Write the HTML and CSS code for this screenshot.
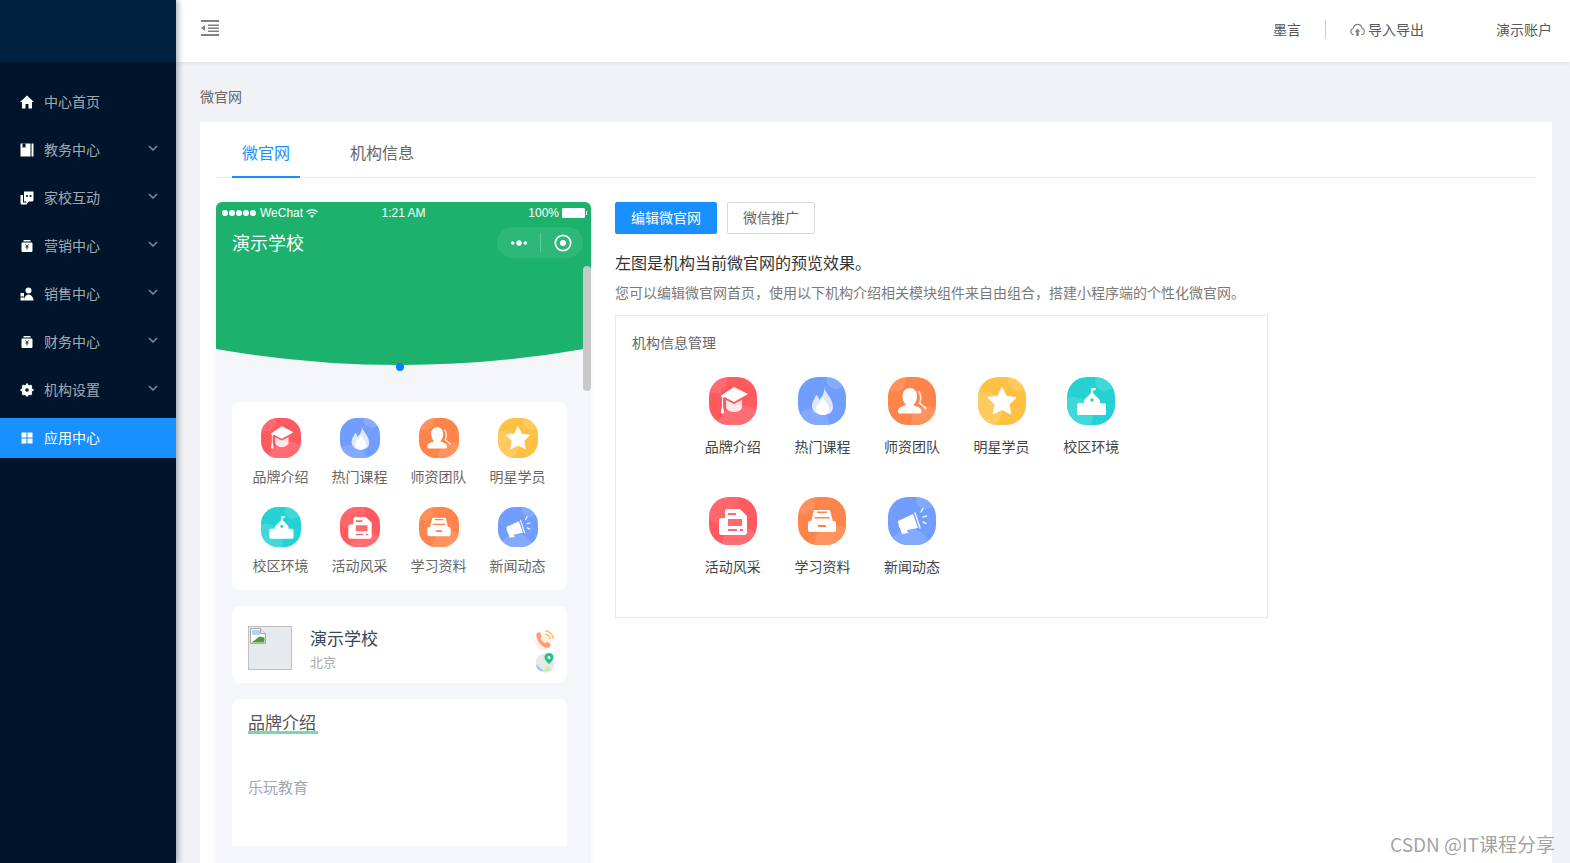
FILE: index.html
```html
<!DOCTYPE html>
<html lang="zh-CN">
<head>
<meta charset="utf-8">
<title>微官网</title>
<link rel="stylesheet" href="styles.css">
</head>
<body>
<svg class="defs" width="0" height="0" aria-hidden="true">
  <defs>
    <clipPath id="sq"><rect width="48" height="48" rx="20"/></clipPath>
    <symbol id="i-cap" viewBox="0 0 48 48">
      <g clip-path="url(#sq)"><rect width="48" height="48" fill="#ff5a5e"/><circle cx="32" cy="52" r="24" fill="#ff7479" opacity=".7"/><circle cx="6" cy="4" r="12" fill="#ff7479" opacity=".6"/></g>
      <path d="M17 23v8c2 3 5 4 8 4s6-1 8-4v-8l-8 4z" fill="#fff" opacity=".85"/>
      <path d="M25 10l14 7-14 8-9.500-5-1.500 1v8l1 6c0 2-3 2-3 0l1-6v-9l-1.500-1z" fill="#fff"/>
    </symbol>
    <symbol id="i-flame" viewBox="0 0 48 48">
      <g clip-path="url(#sq)"><rect width="48" height="48" fill="#719dff"/><circle cx="38" cy="2" r="10" fill="#8fb2ff" opacity=".7"/><circle cx="14" cy="50" r="18" fill="#8fb2ff" opacity=".6"/></g>
      <path d="M26 10c1 6 9 11 9 20 0 6-5 8-10 8s-11-3-11-9c0-5 3-7 4-11 2 1 3 3 3 5 3-3 6-7 5-13z" fill="#dfe8ff"/>
      <path d="M25 20c1 4 6 7 6 12 0 4-3 6-6 6s-7-2-7-6c0-5 6-7 7-12z" fill="#fff"/>
    </symbol>
    <symbol id="i-person" viewBox="0 0 48 48">
      <g clip-path="url(#sq)"><rect width="48" height="48" fill="#fd844b"/><circle cx="40" cy="46" r="17" fill="#ff9a68" opacity=".7"/><circle cx="7" cy="4" r="11" fill="#ff9a68" opacity=".6"/></g>
      <path d="M22 11c4 0 7 3 7 8 0 4-1.500 7-3.500 9 3 1.500 7 2 8 5.500.400 2-.500 3-2 3H12c-1.500 0-2.500-1-2-3 1-3.500 5-4 8-5.500-2-2-3.500-5-3.500-9 0-5 3.500-8 7.500-8z" fill="#fff"/>
      <path d="M30.500 14c2 3 3 8 1 12 2 2 5 3 6.500 6" fill="none" stroke="#fff" stroke-width="1.800" opacity=".75"/>
    </symbol>
    <symbol id="i-star" viewBox="0 0 48 48">
      <g clip-path="url(#sq)"><rect width="48" height="48" fill="#ffc142"/><circle cx="8" cy="32" r="17" fill="#ffcf6e" opacity=".7"/><circle cx="40" cy="4" r="10" fill="#ffcf6e" opacity=".6"/></g>
      <path d="M24 10.500l4.300 8.700 9.700 1.400-7 6.800 1.700 9.600-8.700-4.500-8.700 4.500 1.700-9.600-7-6.800 9.700-1.400z" fill="#fff" stroke="#fff" stroke-width="1" stroke-linejoin="round"/>
    </symbol>
    <symbol id="i-school" viewBox="0 0 48 48">
      <g clip-path="url(#sq)"><rect width="48" height="48" fill="#25d1d3"/><circle cx="6" cy="40" r="20" fill="#4ddcdc" opacity=".7"/><circle cx="38" cy="4" r="10" fill="#4ddcdc" opacity=".7"/></g>
      <path d="M25 11h4l-1 2.500h-2V16l7 7v3h4c1 0 2 1 2 2v8c0 2-1 2-2 2H12c-1 0-2 0-2-2v-8c0-1 1-2 2-2h5v-3l7-7v-5z" fill="#fff"/>
      <circle cx="25" cy="23" r="1.800" fill="#25d1d3"/>
    </symbol>
    <symbol id="i-doc" viewBox="0 0 48 48">
      <g clip-path="url(#sq)"><rect width="48" height="48" fill="#ff5a5e"/><circle cx="12" cy="8" r="18" fill="#ff7479" opacity=".5"/><circle cx="32" cy="50" r="20" fill="#ff7479" opacity=".7"/></g>
      <path d="M18 12h13l7 7v16c0 2-1 3-3 3H12c-1 0-2-1-2-3V24c0-2 1-3 3-3h3v-7c0-1 1-2 2-2z" fill="#fff"/>
      <path d="M19 16h8v2h-8zM19 22h14v7H19zM19 32h9v2h-9zM31 32h3v2h-3z" fill="#ff6a6e"/>
    </symbol>
    <symbol id="i-drawer" viewBox="0 0 48 48">
      <g clip-path="url(#sq)"><rect width="48" height="48" fill="#fd844b"/><circle cx="36" cy="48" r="20" fill="#ff9a68" opacity=".7"/><circle cx="6" cy="6" r="11" fill="#ff9a68" opacity=".6"/></g>
      <path d="M16 13h16l3 12h-22z" fill="#fff"/>
      <rect x="10" y="24" width="28" height="11" rx="2" fill="#fff"/>
      <path d="M19 14.500h10v1.500H19zM16.500 20h15v1.500h-15zM20 28h8v2h-8z" fill="#fd844b"/>
    </symbol>
    <symbol id="i-horn" viewBox="0 0 48 48">
      <g clip-path="url(#sq)"><rect width="48" height="48" fill="#719dff"/><circle cx="22" cy="52" r="20" fill="#8fb2ff" opacity=".6"/><circle cx="38" cy="2" r="10" fill="#8fb2ff" opacity=".6"/></g>
      <path d="M10 24l15-7 5 14-11 2 1 3-6 1-2-6-1-1z" fill="#fff"/>
      <path d="M27 16l5 15M33 15l2-3.500M35 20l3.500-1M35 25l3 1.500" fill="none" stroke="#fff" stroke-width="1.500" stroke-linecap="round" opacity=".9"/>
    </symbol>
  </defs>
</svg>

<aside class="sidebar">
  <div class="logo"></div>
  <nav class="menu">
    <a class="menu-item"><svg class="mi" viewBox="0 0 14 14"><path d="M7 .5L0 7h2v6.500h3.500V9h3v4.500H12V7h2z" fill="#fff"/></svg><span class="mt">中心首页</span></a>
    <a class="menu-item"><svg class="mi" viewBox="0 0 14 14"><path d="M.5.500h10v13H.5z" fill="#fff"/><path d="M11.500.500h2v13h-2z" fill="#fff"/><path d="M2.500.500h3v4.500L4 4l-1.500 1z" fill="#00152b"/></svg><span class="mt">教务中心</span><svg class="chev" viewBox="0 0 10 6"><path d="M1 1l4 4 4-4" fill="none" stroke="#7b8794" stroke-width="1.600"/></svg></a>
    <a class="menu-item"><svg class="mi" viewBox="0 0 14 14"><path d="M4 .5h9.500v8.500c0 1-1 1.500-1 1.500H9l-2 2-1-2H4z" fill="#fff"/><path d="M.5 4H3v7.500h4V13.500H3l-1.500 .5v-1c-1 0-1-1-1-1z" fill="#fff"/><circle cx="7" cy="5" r="1.100" fill="#00152b"/><circle cx="10.500" cy="5" r="1.100" fill="#00152b"/></svg><span class="mt">家校互动</span><svg class="chev" viewBox="0 0 10 6"><path d="M1 1l4 4 4-4" fill="none" stroke="#7b8794" stroke-width="1.600"/></svg></a>
    <a class="menu-item"><svg class="mi" viewBox="0 0 14 14"><path d="M3.500 1h7v1.500h-7zM2.500 3.500h9c.5 0 1 .5 1 1v7c0 1-.5 1.500-1 1.500h-9c-.5 0-1-.5-1-1.500v-7c0-.5.500-1 1-1z" fill="#fff"/><path d="M5.500 5.500L7 7.500l1.500-2M5.500 8h3M7 7.500v3" fill="none" stroke="#00152b" stroke-width=".9"/></svg><span class="mt">营销中心</span><svg class="chev" viewBox="0 0 10 6"><path d="M1 1l4 4 4-4" fill="none" stroke="#7b8794" stroke-width="1.600"/></svg></a>
    <a class="menu-item"><svg class="mi" viewBox="0 0 14 14"><circle cx="8.500" cy="3.500" r="3" fill="#fff"/><path d="M4 13.500c0-3 2-6 4.500-6s5 3 5 6z" fill="#fff"/><path d="M.5 6H4v3.500H.5zM.5 10.500H4v3H.5z" fill="#fff"/></svg><span class="mt">销售中心</span><svg class="chev" viewBox="0 0 10 6"><path d="M1 1l4 4 4-4" fill="none" stroke="#7b8794" stroke-width="1.600"/></svg></a>
    <a class="menu-item"><svg class="mi" viewBox="0 0 14 14"><path d="M3.500 1h7v1.500h-7zM2.500 3.500h9c.5 0 1 .5 1 1v7c0 1-.5 1.500-1 1.500h-9c-.5 0-1-.5-1-1.500v-7c0-.5.500-1 1-1z" fill="#fff"/><path d="M5.500 5.500L7 7.500l1.500-2M5.500 8h3M7 7.500v3" fill="none" stroke="#00152b" stroke-width=".9"/></svg><span class="mt">财务中心</span><svg class="chev" viewBox="0 0 10 6"><path d="M1 1l4 4 4-4" fill="none" stroke="#7b8794" stroke-width="1.600"/></svg></a>
    <a class="menu-item"><svg class="mi" viewBox="0 0 14 14"><circle cx="7" cy="7" r="4" fill="none" stroke="#fff" stroke-width="3"/><path d="M7 .5v13M.5 7h13M2.400 2.400l9.200 9.200M11.600 2.400l-9.200 9.200" stroke="#fff" stroke-width="2.200"/><circle cx="7" cy="7" r="1.800" fill="#00152b"/></svg><span class="mt">机构设置</span><svg class="chev" viewBox="0 0 10 6"><path d="M1 1l4 4 4-4" fill="none" stroke="#7b8794" stroke-width="1.600"/></svg></a>
    <a class="menu-item active"><svg class="mi" viewBox="0 0 14 14"><path d="M1.500 1.500h5v5h-5zM7.500 1.500h5v5h-5zM1.500 7.500h5v5h-5zM7.500 7.500h5v5h-5z" fill="#fff"/></svg><span class="mt">应用中心</span></a>
  </nav>
</aside>

<div class="main">
  <header class="topbar">
    <svg class="burger" viewBox="0 0 18 16"><path d="M0 0h18v2H0zM0 14h18v2H0zM7 4.500h11v1.500H7zM7 7.500h11v1.500H7zM7 10.500h11v1.500H7zM0 8l4-3v6z" fill="#808080"/></svg>
    <div class="top-right">
      <span class="top-text">墨言</span>
      <span class="top-div"></span>
      <svg class="cloud" viewBox="0 0 16 14"><path d="M4 12.500C2 12.500 .8 11 .8 9.200c0-1.600 1-2.900 2.600-3.200C3.900 3.300 5.900 1.500 8.200 1.500s4.200 1.700 4.700 4.300c1.500.3 2.400 1.700 2.400 3.300 0 1.900-1.300 3.400-3.300 3.400" fill="none" stroke="#808080" stroke-width="1.200"/><path d="M8 6l3 3.300H9.300V14H6.700V9.300H5z" fill="#808080"/></svg>
      <span class="top-text">导入导出</span>
      <span class="top-text account">演示账户</span>
    </div>
  </header>

  <div class="content">
    <div class="crumb">微官网</div>
    <section class="card">
      <div class="tabs">
        <span class="tab on">微官网</span>
        <span class="tab">机构信息</span>
      </div>
      <div class="body">
        <div class="phone">
          <div class="hero">
            <svg class="hero-bg" viewBox="0 0 374 163" preserveAspectRatio="none"><path d="M0 0H374V147H367Q184 179 0 147Z" fill="#1cb26e"/></svg>
            <div class="status">
              <span class="st-l"><span class="signal"><i></i><i></i><i></i><i></i><i></i></span>WeChat<svg class="wifi" viewBox="0 0 12 9"><path d="M.5 3a8 8 0 0 1 11 0M2.300 5a5.300 5.300 0 0 1 7.400 0" fill="none" stroke="#fff" stroke-width="1.200"/><path d="M4 6.800a3 3 0 0 1 4 0L6 9z" fill="#fff"/></svg></span>
              <span class="st-c">1:21 AM</span>
              <span class="st-r">100%<span class="battery"></span></span>
            </div>
            <div class="navrow">
              <span class="school">演示学校</span>
              <div class="capsule">
                <svg class="dots" viewBox="0 0 20 6"><circle cx="3" cy="3" r="2" fill="#fff"/><circle cx="10" cy="3" r="3" fill="#fff"/><circle cx="17" cy="3" r="2" fill="#fff"/></svg>
                <span class="cap-div"></span>
                <svg class="target" viewBox="0 0 18 18"><circle cx="9" cy="9" r="7.700" fill="none" stroke="#fff" stroke-width="1.700"/><circle cx="9" cy="9" r="3" fill="#fff"/></svg>
              </div>
            </div>
          </div>
          <span class="swipe-dot"></span>
          <span class="thumb"></span>

          <div class="pcard modules">
            <div class="mod"><svg class="mod-i"><use href="#i-cap"/></svg><span>品牌介绍</span></div>
            <div class="mod"><svg class="mod-i"><use href="#i-flame"/></svg><span>热门课程</span></div>
            <div class="mod"><svg class="mod-i"><use href="#i-person"/></svg><span>师资团队</span></div>
            <div class="mod"><svg class="mod-i"><use href="#i-star"/></svg><span>明星学员</span></div>
            <div class="mod"><svg class="mod-i"><use href="#i-school"/></svg><span>校区环境</span></div>
            <div class="mod"><svg class="mod-i"><use href="#i-doc"/></svg><span>活动风采</span></div>
            <div class="mod"><svg class="mod-i"><use href="#i-drawer"/></svg><span>学习资料</span></div>
            <div class="mod"><svg class="mod-i"><use href="#i-horn"/></svg><span>新闻动态</span></div>
          </div>

          <div class="pcard info">
            <div class="thumbimg">
              <svg class="broken" viewBox="0 0 16 16"><path d="M.5.500h10l5 5v10H.5z" fill="#fff" stroke="#a8a8a8"/><path d="M10.500.500v5h5" fill="#e8e8e8" stroke="#a8a8a8"/><path d="M2 2h8v5H2z" fill="#b5cff5"/><path d="M1.500 14.500l8-6 5 1v5z" fill="#4f9a3a"/></svg>
            </div>
            <div class="info-text">
              <div class="info-name">演示学校</div>
              <div class="info-city">北京</div>
            </div>
            <div class="info-icons">
              <svg class="ii" viewBox="0 0 20 20"><circle cx="8" cy="12" r="8" fill="#fff1ea"/><path d="M2 3c1-1 3-1 3.500 0l1 3c.2.800-1 1.500-1.200 2 .6 2 2.700 4.500 4.700 5 .6 0 1.200-1.300 2-1l3 1.500c1 .6.500 2.500-.5 3.500-1.500 1.500-4 1-7-1C4.500 13.500 2.200 10 1.600 7 1.200 5 1.200 4 2 3z" fill="#ff9f70"/><path d="M10 .8c4 .3 8 3.500 8.500 8.500M10 4.200c3 .2 5 2.400 5.300 5" fill="none" stroke="#ffc06a" stroke-width="1.500"/></svg>
              <svg class="ii" viewBox="0 0 20 20"><circle cx="10" cy="10" r="9.500" fill="#e8e8e4"/><path d="M1 11l8 7c-4 1-8-2-8-7z" fill="#a5c8f7"/><path d="M8 18l5-5 3 4c-2 2-5 2-8 1z" fill="#cdeaa5"/><path d="M14 0c-3 0-4.500 2.200-4.500 4.200C9.500 7 14 11 14 11s4.500-4 4.500-6.800C18.500 2.200 17 0 14 0z" fill="#1fc486"/><circle cx="14" cy="4.500" r="1.600" fill="#fff"/></svg>
            </div>
          </div>

          <div class="pcard brand">
            <div class="brand-title">品牌介绍</div>
            <div class="brand-text">乐玩教育</div>
          </div>
        </div>

        <div class="panel">
          <div class="btns">
            <span class="btn primary">编辑微官网</span>
            <span class="btn">微信推广</span>
          </div>
          <p class="lead">左图是机构当前微官网的预览效果。</p>
          <p class="desc">您可以编辑微官网首页，使用以下机构介绍相关模块组件来自由组合，搭建小程序端的个性化微官网。</p>
          <div class="box">
            <div class="box-title">机构信息管理</div>
            <div class="box-grid">
              <div class="bm"><svg class="bm-i"><use href="#i-cap"/></svg><span>品牌介绍</span></div>
              <div class="bm"><svg class="bm-i"><use href="#i-flame"/></svg><span>热门课程</span></div>
              <div class="bm"><svg class="bm-i"><use href="#i-person"/></svg><span>师资团队</span></div>
              <div class="bm"><svg class="bm-i"><use href="#i-star"/></svg><span>明星学员</span></div>
              <div class="bm"><svg class="bm-i"><use href="#i-school"/></svg><span>校区环境</span></div>
              <div class="bm"><svg class="bm-i"><use href="#i-doc"/></svg><span>活动风采</span></div>
              <div class="bm"><svg class="bm-i"><use href="#i-drawer"/></svg><span>学习资料</span></div>
              <div class="bm"><svg class="bm-i"><use href="#i-horn"/></svg><span>新闻动态</span></div>
            </div>
          </div>
        </div>
      </div>
    </section>
  </div>
</div>
<div class="watermark">CSDN @IT课程分享</div>
</body>
</html>
```
FILE: styles.css
```css
* { box-sizing: border-box; }
html, body { height: 100%; }
body {
  margin: 0;
  display: flex;
  height: 863px;
  overflow: hidden;
  background: #f0f2f5;
  font-family: "Noto Sans CJK SC", "Noto Sans", "Liberation Sans", sans-serif;
  font-size: 14px;
  color: #595959;
}
.defs { position: absolute; }

/* sidebar */
.sidebar {
  width: 176px;
  flex: none;
  background: #00152b;
  box-shadow: 2px 0 6px rgba(0, 21, 41, .35);
  position: relative;
  z-index: 2;
}
.logo { height: 62px; background: #002140; }
.menu { padding-top: 20px; display: flex; flex-direction: column; gap: 8px; }
.menu-item {
  height: 40px;
  display: flex;
  align-items: center;
  padding-left: 20px;
  color: rgba(255, 255, 255, .65);
  line-height: 20px;
}
.menu-item.active { background: #1890ff; color: #fff; }
.mi { width: 14px; height: 14px; flex: none; margin-right: 10px; }
.mt { flex: none; width: 56px; margin-top: -2px; }
.chev { width: 10px; height: 6px; margin: -4px 0 0 48px; flex: none; }

/* main */
.main { flex: 1; min-width: 0; display: flex; flex-direction: column; }
.topbar {
  height: 62px;
  flex: none;
  background: #fff;
  box-shadow: 0 1px 4px rgba(0, 21, 41, .08);
  display: flex;
  align-items: center;
  justify-content: space-between;
  padding: 0 18px 0 25px;
  position: relative;
}
.burger { width: 18px; height: 16px; margin-top: -6px; }
.top-right { display: flex; align-items: center; margin-top: -4px; }
.top-text { line-height: 20px; color: #595959; }
.top-div { width: 1px; height: 19px; background: #ccc; margin: 0 24px; }
.cloud { width: 15px; height: 13px; margin-right: 3px; }
.account { margin-left: 72px; }

.content { flex: 1; min-height: 0; padding: 24px 18px 0 24px; display: flex; flex-direction: column; }
.crumb { line-height: 20px; height: 20px; margin-bottom: 16px; color: #666; }
.card { flex: 1; min-height: 0; background: #fff; padding: 0 16px; overflow: hidden; }

.tabs {
  height: 56px;
  border-bottom: 1px solid #e8e8e8;
  display: flex;
  gap: 40px;
  padding-left: 16px;
  margin-bottom: 24px;
}
.tab {
  height: 56px;
  padding: 19px 10px 0;
  font-size: 16px;
  line-height: 22px;
  color: #666;
}
.tab.on { color: #1890ff; border-bottom: 2px solid #1890ff; }

.body { display: flex; gap: 24px; align-items: flex-start; }

/* phone */
.phone {
  width: 375px;
  height: 720px;
  flex: none;
  background: #f5f6fa;
  border-radius: 6px 6px 0 0;
  box-shadow: 0 0 6px rgba(0, 0, 0, .05);
  position: relative;
  overflow: hidden;
}
.hero { height: 163px; position: relative; color: #fff; }
.hero-bg { position: absolute; inset: 0; width: 100%; height: 100%; }
.status {
  position: relative;
  height: 22px;
  display: flex;
  align-items: center;
  padding: 0 6px 0 6px;
  font-family: "Liberation Sans", Arial, sans-serif;
  font-size: 12px;
  line-height: 22px;
}
.st-l, .st-r { flex: 1; display: flex; align-items: center; }
.st-r { justify-content: flex-end; }
.st-c { flex: none; }
.signal { display: flex; gap: 1px; margin-right: 4px; }
.signal i { width: 6px; height: 6px; border-radius: 50%; background: #fff; display: block; }
.wifi { width: 12px; height: 9px; margin-left: 3px; }
.battery {
  width: 23px;
  height: 10px;
  background: #fff;
  border: 1px solid #fff;
  border-radius: 1px;
  margin-left: 3px;
  position: relative;
}
.battery::after {
  content: "";
  position: absolute;
  right: -3px;
  top: 2px;
  width: 1px;
  height: 4px;
  background: #fff;
}
.navrow {
  position: relative;
  display: flex;
  align-items: center;
  justify-content: space-between;
  margin-top: 3px;
  padding: 0 8px 0 16px;
}
.school { font-size: 18px; line-height: 31px; }
.capsule {
  width: 86px;
  height: 31px;
  border-radius: 16px;
  background: rgba(255, 255, 255, .08);
  display: flex;
  align-items: center;
  padding-left: 13px;
}
.dots { width: 18px; height: 6px; }
.cap-div { width: 1px; height: 19px; background: rgba(255, 255, 255, .25); margin: 0 13px 0 12px; }
.target { width: 18px; height: 18px; }
.swipe-dot {
  position: absolute;
  left: 180px;
  top: 161px;
  width: 8px;
  height: 8px;
  border-radius: 50%;
  background: #0a7cff;
}
.thumb {
  position: absolute;
  right: 0;
  top: 64px;
  width: 8px;
  height: 125px;
  border-radius: 4px;
  background: #c9c9c9;
}
.pcard {
  width: 335px;
  margin: 16px 0 0 16px;
  background: #fff;
  border-radius: 8px;
}
.modules {
  margin-top: 37px;
  height: 188px;
  padding: 16px 9px 0;
  display: grid;
  grid-template-columns: repeat(4, 79px);
  grid-auto-rows: 89px;
}
.mod { display: flex; flex-direction: column; align-items: center; }
.mod-i { width: 40px; height: 40px; display: block; }
.mod span { margin-top: 8px; line-height: 20px; color: #666; white-space: nowrap; }

.info { height: 77px; display: flex; align-items: center; padding: 6px 12px 0 16px; }
.thumbimg {
  width: 44px;
  height: 44px;
  flex: none;
  background: #e6e9ee;
  border: 1px solid #c0c0c0;
  padding: 1px;
}
.broken { display: block; width: 16px; height: 16px; }
.info-text { flex: 1; margin-left: 18px; padding-top: 2px; }
.info-name { font-size: 17px; line-height: 24px; color: #3a4658; }
.info-city { font-size: 13px; line-height: 20px; color: #a8a8a8; margin-top: 2px; }
.info-icons { display: flex; flex-direction: column; gap: 3px; padding-top: 7px; }
.ii { width: 20px; height: 20px; display: block; }

.brand { height: 147px; padding: 12px 16px 0; border-radius: 8px 8px 0 0; }
.brand-title {
  width: 70px;
  font-size: 17px;
  line-height: 21px;
  height: 23px;
  color: #555;
  border-bottom: 3px solid #7bd8ab;
  white-space: nowrap;
}
.brand-text { margin-top: 42px; font-size: 15px; line-height: 22px; color: #a0a6b4; }

/* right panel */
.panel { flex: none; width: 653px; }
.btns { display: flex; gap: 10px; }
.btn {
  height: 32px;
  padding: 0 15px;
  border: 1px solid #d9d9d9;
  border-radius: 2px;
  line-height: 28px;
  color: #666;
  background: #fff;
}
.btn.primary { background: #1890ff; border-color: #1890ff; color: #fff; }
.lead { margin: 16px 0 0; font-size: 16px; line-height: 24px; color: #333; }
.desc { margin: 8px 0 0; line-height: 20px; color: #7a7a7a; white-space: nowrap; }
.box {
  margin-top: 13px;
  height: 303px;
  border: 1px solid #e8e8e8;
  padding: 16px 16px 0;
}
.box-title { line-height: 20px; color: #666; }
.box-grid {
  margin: 25px 0 0 56px;
  display: grid;
  grid-template-columns: repeat(5, 89.600px);
  grid-auto-rows: 120px;
}
.bm { display: flex; flex-direction: column; align-items: center; }
.bm-i { width: 48px; height: 48px; display: block; }
.bm span { margin-top: 11px; line-height: 20px; color: #444; white-space: nowrap; }

.watermark {
  position: absolute;
  right: 15px;
  bottom: 6px;
  font-size: 19px;
  line-height: 26px;
  color: rgba(110, 110, 110, .65);
  font-family: "Noto Sans CJK SC", sans-serif;
}
```
